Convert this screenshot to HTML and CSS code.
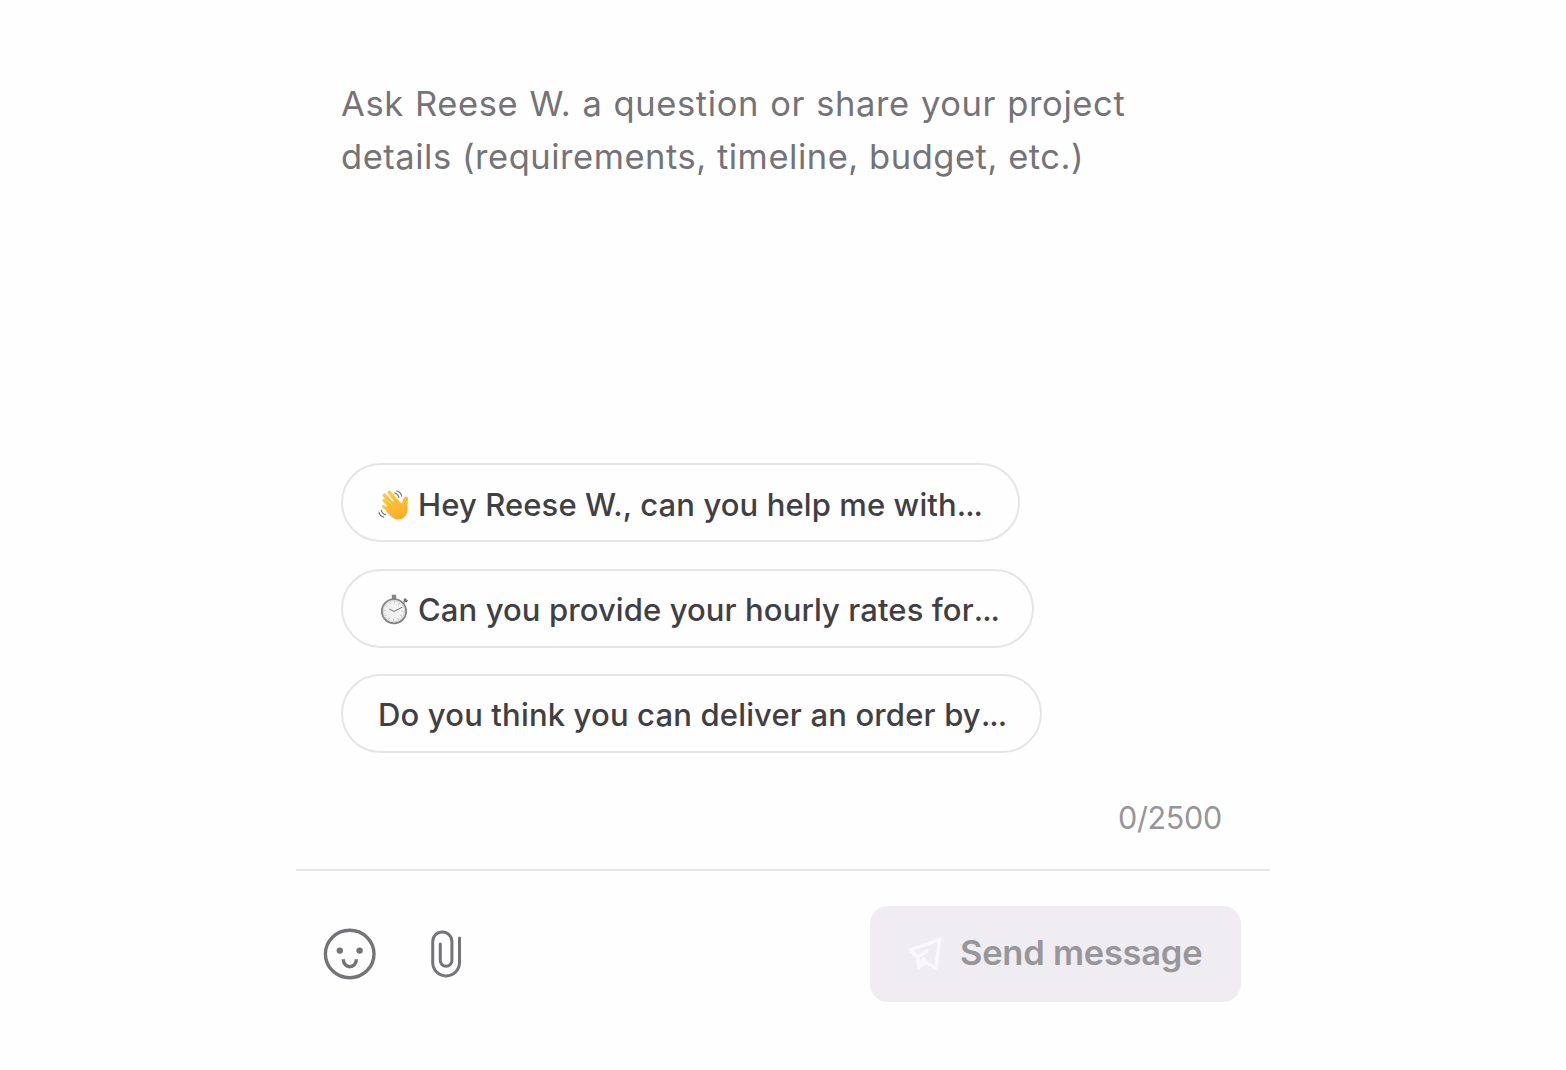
FILE: index.html
```html
<!DOCTYPE html>
<html lang="en">
<head>
    <meta charset="UTF-8">
    <meta name="viewport" content="width=device-width, initial-scale=1.0">
    <title>Message</title>
    <link rel="stylesheet" href="styles.css">
</head>
<body>
    <div class="composer">
        <div class="message-area">
            <p class="placeholder">
                <span class="line line-one">Ask Reese W. a question or share your project</span>
                <span class="line line-two">details (requirements, timeline, budget, etc.)</span>
            </p>

            <div class="suggestions">
                <button class="chip chip-help">
                    <svg class="emoji" viewBox="0 0 32 32">
                        <defs>
                            <linearGradient id="skin" x1="0" y1="0" x2="0.6" y2="1">
                                <stop offset="0" stop-color="#ffca40"/>
                                <stop offset="1" stop-color="#f9aa25"/>
                            </linearGradient>
                        </defs>
                        <g fill="none" stroke="#ffc83f" stroke-linecap="round">
                            <path d="M6.3 11.5 15 20" stroke-width="3.6"/>
                            <path d="M6.5 6.3 16 17" stroke-width="3.8"/>
                            <path d="M11.6 3.6 20 14" stroke-width="3.8"/>
                            <path d="M5.5 17.5 13 23" stroke-width="3.4"/>
                        </g>
                        <path fill="url(#skin)" d="M8 18 18.5 9.5 23.5 14.5C25.2 13.3 24.4 10.7 26 8.8 27.1 7.4 29.6 7.5 30 9.3 30.3 10.9 29.5 13.3 29.4 15.4 29.3 18.7 30.2 22.1 28.2 25.6 25.8 29.8 21.2 31.8 17 29.9 14 28.6 11.6 26 8 22.3Z"/>
                        <path d="M7.8 12.7 14 18.4M9.5 9.2 16.2 15.8M13.4 7.7 19 13" fill="none" stroke="#eea02a" stroke-width=".7"/>
                        <path d="M18.5 1.7C21.5 2.6 23.3 4.6 23.8 7.7M16.3 3.7C19.1 4.6 20.6 6.2 21 8.8M.8 22.7C1.3 25.7 3.1 27.7 6.2 28.2M3.2 20.9C3.7 23.6 5.3 25.3 8 25.8" fill="none" stroke="#68696b" stroke-width="1.1"/>
                    </svg>
                    <span>Hey Reese W., can you help me with<span class="dots">...</span></span>
                </button>
                <button class="chip chip-rates">
                    <svg class="emoji" viewBox="0 0 32 32">
                        <path d="M13.8 1.7h4.4v5h-4.4z" fill="#858587"/>
                        <path d="m25.7 9.3 2.1-2" stroke="#858587" stroke-width="2"/>
                        <path d="m26.2 6 3 2.6" stroke="#68686b" stroke-width="2.4"/>
                        <circle cx="16" cy="18.2" r="12.1" fill="#f1f1f2" stroke="#838386" stroke-width="1.8"/>
                        <circle cx="16" cy="18.2" r="10.6" fill="none" stroke="#c9c9cb" stroke-width=".7"/>
                        <circle cx="16" cy="18.2" r="8.8" fill="none" stroke="#b2b2b5" stroke-width="2" stroke-dasharray=".7 3.908"/>
                        <path d="m11.3 16 4.7 2.5 8.2-4.3" fill="none" stroke="#727275" stroke-width="1"/>
                    </svg>
                    <span>Can you provide your hourly rates for<span class="dots">...</span></span>
                </button>
                <button class="chip chip-deadline">
                    <span>Do you think you can deliver an order by<span class="dots">...</span></span>
                </button>
            </div>

            <div class="counter">0/2500</div>
        </div>

        <div class="toolbar">
            <div class="tools">
                <button class="tool" aria-label="Emoji">
                    <svg width="54" height="54" viewBox="0 0 54 54">
                        <ellipse cx="26.7" cy="27" rx="24.3" ry="23.8" fill="none" stroke="#747377" stroke-width="3.4"/>
                        <circle cx="16.8" cy="23.6" r="3.2" fill="#747377"/>
                        <circle cx="36.6" cy="23.6" r="3.2" fill="#747377"/>
                        <path d="M20.4 32.2v1.1a6.4 6.4 0 0 0 12.8 0v-1.1" fill="none" stroke="#747377" stroke-width="3.4"/>
                    </svg>
                </button>
                <button class="tool" aria-label="Attach file">
                    <svg width="34" height="50" viewBox="0 0 34 50">
                        <path d="M11.3 15V31.5a5.8 5.8 0 0 0 11.6 0V12.5a9.6 9.6 0 0 0-19.2 0V33.5a13.4 13.4 0 0 0 26.8 0V9" fill="none" stroke="#747377" stroke-width="3" stroke-linecap="round"/>
                    </svg>
                </button>
            </div>
            <button class="send-btn" disabled>
                <svg width="36" height="36" viewBox="0 0 36 36">
                    <path d="M3.2 14 33 3.2 28.6 32.2 19 26.4 11.8 31.2 11 21.5ZM11 21.5 20 14.5M11.8 31.2 16.5 22.5 19 26.4" fill="none" stroke="#fafafc" stroke-width="3.2" stroke-linejoin="round" stroke-linecap="round"/>
                </svg>
                <span>Send message</span>
            </button>
        </div>
    </div>
</body>
</html>
```

FILE: styles.css
```css
* {
    box-sizing: border-box;
}

body {
    margin: 0;
    background-color: #fefefe;
    font-family: Inter, "Liberation Sans", sans-serif;
}

button {
    font-family: inherit;
    border: none;
    background: none;
    padding: 0;
}

.composer {
    width: 974px;
    margin-left: 296px;
}

.message-area {
    display: flex;
    flex-direction: column;
    height: 871px;
    padding: 77px 45px 0;
    border-bottom: 2px solid #e5e4e7;
}

.placeholder {
    height: 386px;
    margin: 0;
    color: #747377;
    font-size: 34.5px;
    line-height: 53px;
}

.line {
    display: block;
    white-space: nowrap;
}

.line-one {
    letter-spacing: 0.62px;
    word-spacing: 0.8px;
}

.line-two {
    letter-spacing: 0.53px;
}

.suggestions {
    display: flex;
    flex-direction: column;
    align-items: flex-start;
    gap: 26.5px;
}

.chip {
    display: flex;
    align-items: center;
    height: 79px;
    padding: 2px 0 0 35px;
    border: 2px solid #e6e4e9;
    border-radius: 40px;
    color: #404044;
    font-size: 31px;
    font-weight: 550;
    letter-spacing: 0.1px;
    white-space: nowrap;
}

.chip-help {
    width: 679px;
    padding-top: 4px;
}

.chip-rates {
    width: 693px;
}

.chip-deadline {
    width: 701px;
    letter-spacing: 0.16px;
}

.dots {
    letter-spacing: -1px;
}

.emoji {
    width: 32px;
    height: 32px;
    margin: 0 8px 0 0;
}

.counter {
    align-self: flex-end;
    margin-top: 45px;
    margin-right: 3px;
    color: #969599;
    font-size: 30.5px;
    letter-spacing: -0.3px;
    line-height: 40px;
}

.toolbar {
    display: flex;
    align-items: center;
    justify-content: space-between;
    padding: 35px 29px 0 27px;
}

.tools {
    display: flex;
    align-items: center;
    gap: 52px;
}

.tool svg {
    display: block;
}

.send-btn {
    display: flex;
    align-items: center;
    width: 371px;
    height: 96px;
    padding: 0 0 3px 37px;
    gap: 17px;
    border-radius: 18px;
    background-color: #efedf2;
    color: #97969b;
    font-size: 34.5px;
    font-weight: 600;
    letter-spacing: -0.25px;
    white-space: nowrap;
}

.send-btn svg {
    margin-top: 3px;
}
```
